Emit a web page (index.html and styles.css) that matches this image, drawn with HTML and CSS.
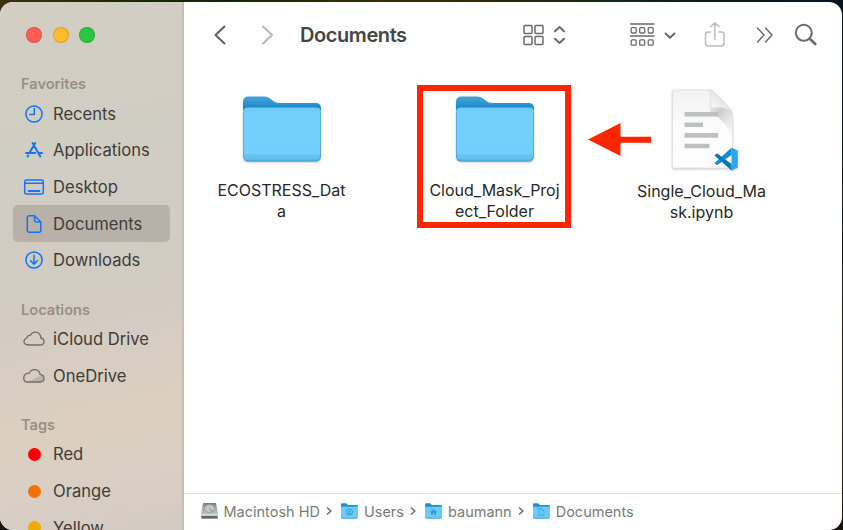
FILE: index.html
```
<!DOCTYPE html>
<html lang="en">
<head>
<meta charset="utf-8">
<title>Documents</title>
<link rel="stylesheet" href="styles.css">
</head>
<body>
<svg width="0" height="0" class="defs" aria-hidden="true">
  <defs>
    <linearGradient id="back" x1="0" y1="0" x2="0" y2="1"><stop offset="0" stop-color="#46a5da"/><stop offset=".22" stop-color="#1685c6"/><stop offset="1" stop-color="#2c92cd"/></linearGradient>
    <linearGradient id="front" x1="0" y1="0" x2="0" y2="1"><stop offset="0" stop-color="#6bcaf9"/><stop offset=".1" stop-color="#73cffb"/><stop offset=".86" stop-color="#72cffb"/><stop offset=".88" stop-color="#62c1ef"/><stop offset=".93" stop-color="#65c4f2"/><stop offset="1" stop-color="#50ade0"/></linearGradient>
    <linearGradient id="page" x1="0" y1="0" x2="0" y2="1"><stop offset="0" stop-color="#f2f2f2"/><stop offset=".5" stop-color="#fcfcfc"/><stop offset="1" stop-color="#fff"/></linearGradient>
    <linearGradient id="curl" x1="0" y1="1" x2="1" y2="0"><stop offset="0" stop-color="#fff"/><stop offset=".5" stop-color="#e9e9e9"/><stop offset="1" stop-color="#ccc"/></linearGradient>
    <linearGradient id="shade" x1="0" y1="0" x2="1" y2="1"><stop offset=".25" stop-color="#aaa" stop-opacity="0"/><stop offset=".55" stop-color="#999" stop-opacity=".45"/><stop offset="1" stop-color="#aaa" stop-opacity="0"/></linearGradient>
    <linearGradient id="disk" x1="0" y1="0" x2="0" y2="1"><stop offset="0" stop-color="#737779"/><stop offset=".3" stop-color="#a5abad"/><stop offset="1" stop-color="#c8ced1"/></linearGradient>
    <symbol id="folder" viewBox="0 0 80 68">
      <path d="M1 7Q1 1.500 6.500 1.500H22Q25.500 1.500 28 3.500L31.500 6.300Q33.500 8 37 8H73.500Q79 8 79 13.500V61H1Z" fill="url(#back)"/>
      <path d="M1 17Q1 12.500 6 12.500H74Q79 12.500 79 17V61Q79 66.500 73.500 66.500H6.500Q1 66.500 1 61Z" fill="url(#front)"/>
      <path d="M1.500 17V61Q1.500 66 6.500 66H73.500Q78.500 66 78.500 61V17" fill="none" stroke="#398bb5" stroke-opacity=".5"/>
    </symbol>
    <symbol id="minifolder" viewBox="0 0 17 16">
      <path d="M0 1.500Q0 .3 1.200.3H5L7 2H15.800Q17 2 17 3.200V14H0Z" fill="#2391cd"/>
      <path d="M0 3.700H17V14Q17 15.500 15.500 15.500H1.500Q0 15.500 0 14Z" fill="#6acbfa"/>
      <path d="M.5 14.500Q1 15.200 2 15.200H15Q16 15.200 16.500 14.500" fill="none" stroke="#4aa6d4"/>
    </symbol>
  </defs>
</svg>
<div class="window">
  <aside class="sidebar">
    <div class="lights"><i class="close"></i><i class="minimize"></i><i class="maximize"></i></div>
    <h2>Favorites</h2>
    <div class="row"><svg class="ico" viewBox="0 0 22 22"><circle cx="11" cy="11" r="8.100"/><path d="M11.300 5.500V11.500H6.800"/></svg><span>Recents</span></div>
    <div class="row"><svg class="ico apps" viewBox="0 0 22 22"><path d="M12.200 4L6.700 13.500M9.600 4L17.300 17.400M3 14.100H12.200M15.300 14.100H19M5.200 16.400L4.600 17.400"/></svg><span>Applications</span></div>
    <div class="row"><svg class="ico" viewBox="0 0 22 22"><rect x="1.700" y="4" width="18.600" height="14" rx="2"/><path d="M2 7.300H20"/><path d="M5.700 15H16.300" stroke-width="2.200"/></svg><span>Desktop</span></div>
    <div class="row selected"><svg class="ico" viewBox="0 0 22 22"><path d="M6.300 2.700H11.500L17.800 9V17.300Q17.800 19.300 15.800 19.300H6.300Q4.300 19.300 4.300 17.300V4.700Q4.300 2.700 6.300 2.700ZM11.500 3V7.300Q11.500 9 13.200 9H17.500"/></svg><span>Documents</span></div>
    <div class="row"><svg class="ico" viewBox="0 0 22 22"><circle cx="11" cy="11" r="8.100"/><path d="M11 6.300V15M7.600 11.800L11 15.200L14.400 11.800"/></svg><span>Downloads</span></div>
    <h2>Locations</h2>
    <div class="row"><svg class="ico gray" viewBox="0 0 22 22"><path d="M5.500 17H16.800C19.200 17 21 15.500 21 13.400C21 11.500 19.700 10.200 17.800 10C17.800 6.800 15.600 4.200 12.500 4.200C10.100 4.200 8.200 5.500 7.300 7.500C5.400 7.100 4 8.300 3.900 10C2.200 10.500 1 11.800 1 13.600C1 15.600 2.800 17 5.500 17Z"/></svg><span>iCloud Drive</span></div>
    <div class="row"><svg class="ico gray" viewBox="0 0 22 22"><path d="M5 16.800L19.500 9.800Q21 11 20.800 13.800Q20 16.800 16.800 16.800Z" fill="#bcb5ad" stroke="none"/><path d="M4.700 17H17C19.300 17 21 15.700 21 13.600C21 11.300 19.400 9.800 17.200 9.700C16.700 6.900 14.400 4.700 11.500 4.700C9.300 4.700 7.200 6 6.200 8.200C3 8.100.7 10.100.7 12.900C.7 15.400 2.400 17 4.700 17Z"/></svg><span>OneDrive</span></div>
    <h2>Tags</h2>
    <div class="row"><i class="tag red"></i><span>Red</span></div>
    <div class="row"><i class="tag orange"></i><span>Orange</span></div>
    <div class="row"><i class="tag yellow"></i><span>Yellow</span></div>
  </aside>
  <main class="main">
    <header class="toolbar">
      <svg class="nav" width="60" height="24" viewBox="0 0 60 24"><path d="M10.500 3.500L1.500 12L10.500 20.500" stroke="#5f5f5f"/><path d="M49 3.500L58 12L49 20.500" stroke="#b7b7b7"/></svg>
      <h1>Documents</h1>
      <svg class="view" width="44" height="24" viewBox="0 0 44 24"><g stroke-width="1.500"><rect x="1" y="2.500" width="8" height="8" rx="1"/><rect x="12" y="2.500" width="8" height="8" rx="1"/><rect x="1" y="13.500" width="8" height="8" rx="1"/><rect x="12" y="13.500" width="8" height="8" rx="1"/></g><path d="M32 8.200L36.500 4L41 8.200M32 15.800L36.500 20L41 15.800" stroke-width="2"/></svg>
      <svg class="group" width="48" height="26" viewBox="0 0 48 26"><path d="M.5 2H24M.5 14H24" stroke-width="1.500"/><g stroke-width="1.300"><rect x="1.200" y="5.600" width="5" height="5.400" rx="1"/><rect x="9.700" y="5.600" width="5" height="5.400" rx="1"/><rect x="18.200" y="5.600" width="5" height="5.400" rx="1"/><rect x="1.200" y="17.800" width="5" height="5.400" rx="1"/><rect x="9.700" y="17.800" width="5" height="5.400" rx="1"/><rect x="18.200" y="17.800" width="5" height="5.400" rx="1"/></g><path d="M35.500 11.500L40 15.700L44.500 11.500" stroke-width="2"/></svg>
      <svg class="share" width="22" height="26" viewBox="0 0 22 26"><path d="M6.500 10H4Q1.500 10 1.500 12.500V21.500Q1.500 24 4 24H17.500Q20 24 20 21.500V12.500Q20 10 17.500 10H15M10.800 17.500V1M6.500 4.800L10.800 .800L15 4.800"/></svg>
      <svg class="more" width="18" height="16" viewBox="0 0 18 16"><path d="M1.500 1L8 8L1.500 15M9.500 1L16 8L9.500 15" stroke-width="1.500"/></svg>
      <svg class="search" width="24" height="24" viewBox="0 0 24 24"><circle cx="9.800" cy="9.800" r="8" stroke-width="2"/><path d="M15.700 15.700L21.300 21" stroke-width="2.600"/></svg>
    </header>
    <section class="files">
      <div class="file"><svg class="folder" width="80" height="68"><use href="#folder"/></svg><p>ECOSTRESS_Dat<br>a</p></div>
      <div class="file"><svg class="folder" width="80" height="68"><use href="#folder"/></svg><p>Cloud_Mask_Proj<br>ect_Folder</p><i class="highlight"></i></div>
      <div class="file notebook"><svg class="doc" width="70" height="84" viewBox="0 0 70 84">
          <path d="M3.500 2H41Q43 3 45 5L58 18Q62.500 23 62.500 31V80H3.500Q2.500 80 2.500 79V3Q2.500 2 3.500 2Z" fill="url(#page)" stroke="#dedede" stroke-width=".8"/>
          <path d="M28 2H41L62 24V48Q53 29 40 25Q41 10 28 2Z" fill="url(#shade)"/>
          <path d="M38 2Q41.500 5 40.500 20Q54 18 60 23Q57 17 53 13L45 5Q41 1.500 38 2Z" fill="url(#curl)" stroke="#ddd" stroke-width=".6"/>
          <path d="M14.500 26.200H48M14.500 36.800H33M14.500 47.400H48M14.500 58H39.500" stroke="#bdc1c0" stroke-width="4.600"/>
          <path d="M61.500 59.800L67.800 62.500V79.500L61.500 82.500Z" fill="#2ca5ee"/>
          <path d="M61.500 59.800L44.500 75L47 77.200L61.500 67Z" fill="#168bd5"/>
          <path d="M44.500 67.400L47 65.200L61.500 76V82.500L44.500 67.400Z" fill="#0878bd"/>
        </svg><p>Single_Cloud_Ma<br>sk.ipynb</p></div>
      <svg class="arrow" width="64" height="34" viewBox="0 0 64 34"><path d="M0 16.500L32.500 0V13.700H63V19.700H32.500V33Z" fill="#fe2600"/></svg>
    </section>
    <footer class="path">
      <svg width="17" height="16" viewBox="0 0 17 16"><path d="M3 0H14Q15 0 15.200 1L17 11V14.500Q17 16 15.500 16H1.500Q0 16 0 14.500V11L1.800 1Q2 0 3 0Z" fill="url(#disk)"/><ellipse cx="8.500" cy="5.500" rx="5" ry="4" fill="#c3c8ca" stroke="#888e92" stroke-width=".6"/><path d="M8.500 5.500L12 9" stroke="#7c8285"/><path d="M.5 11.800H16.500" stroke="#e0e4e6"/><path d="M.5 13H16.500V15.500H.5Z" fill="#62696c"/></svg><span>Macintosh HD</span><svg class="sep" width="6" height="10" viewBox="0 0 6 10"><path d="M1 1.500L4.700 5L1 8.500"/></svg>
      <svg width="17" height="16" viewBox="0 0 17 16"><use href="#minifolder"/><circle cx="8.500" cy="9" r="3" fill="none" stroke="#3b9bd0"/><circle cx="8.500" cy="8.500" r="1" fill="#3b9bd0"/><path d="M6.500 11Q8.500 9 10.500 11" stroke="#3b9bd0" fill="none"/></svg><span>Users</span><svg class="sep" width="6" height="10" viewBox="0 0 6 10"><path d="M1 1.500L4.700 5L1 8.500"/></svg>
      <svg width="17" height="16" viewBox="0 0 17 16"><use href="#minifolder"/><path d="M5 9L8.500 6L12 9H11V12H9.300V10H7.700V12H6V9Z" fill="#3b9bd0"/></svg><span>baumann</span><svg class="sep" width="6" height="10" viewBox="0 0 6 10"><path d="M1 1.500L4.700 5L1 8.500"/></svg>
      <svg width="17" height="16" viewBox="0 0 17 16"><use href="#minifolder"/><path d="M6 5.700H9L11 7.700V12.300H6ZM9 5.700V7.700H11" fill="none" stroke="#48a9dc" stroke-width=".8"/></svg><span>Documents</span>
    </footer>
  </main>
</div>
</body>
</html>
```
FILE: styles.css
```
* { box-sizing: border-box; }
body {
  margin: 0;
  width: 843px;
  height: 530px;
  padding: 1.500px 1.500px 0 0;
  overflow: hidden;
  font-family: Inter, "Liberation Sans", sans-serif;
  background: linear-gradient(90deg, #3a3210 0, #1b2408 18%, #122408 27%, #302b0c 40%, #3a2a0c 52%, #172714 70%, #071720 92%, #07141d 100%) top / 100% 15px no-repeat,
    linear-gradient(#0a1820 0, #131514 50%, #31200d 80%, #17130a 100%);
}
.defs { position: absolute; }
h1, h2, p { margin: 0; }
.window {
  display: flex;
  width: 841.500px;
  height: 528.500px;
  border-radius: 13px;
  overflow: hidden;
  background: #fff;
}
.sidebar {
  flex: none;
  width: 184px;
  overflow: hidden;
  border-right: 2px solid #c6beb5;
  background: linear-gradient(168deg, #d2cec2 0%, #d0cdc4 30%, #d2cbc2 52%, #d5ccc3 63%, #dccfc0 78%, #d9cfc4 88%, #d3cac3 100%);
}
.lights { display: flex; gap: 10.400px; height: 71.800px; padding: 25.700px 0 0 26.200px; }
.lights i { width: 16px; height: 16px; border-radius: 50%; border: .5px solid #0002; }
.close { background: #ff5d55; }
.minimize { background: #ffbc2d; }
.maximize { background: #28c73f; }
.sidebar h2 {
  height: 22px;
  margin-top: 20px;
  padding-left: 21px;
  font-size: 14.600px;
  line-height: 22px;
  font-weight: 600;
  color: #989084;
}
.sidebar .lights + h2 { margin-top: 0; }
.row {
  display: flex;
  align-items: center;
  gap: 8px;
  height: 36.700px;
  margin: 0 12.500px 0 13px;
  padding-left: 10px;
  border-radius: 5px;
  font-size: 16.600px;
  color: #403d39;
  white-space: nowrap;
}
.selected { background: #b7b1a9; }
.ico { width: 22px; height: 22px; flex: none; fill: none; stroke: #1474f5; stroke-width: 1.500; stroke-linecap: round; stroke-linejoin: round; }
.apps { stroke-width: 2; }
.gray { stroke: #716c66; stroke-width: 1.300; }
.tag { width: 13px; height: 13px; margin: 0 4.500px; border-radius: 50%; }
.red { background: #fe0000; }
.orange { background: #f57100; }
.yellow { background: #ecac00; }
.main { flex: 1; display: flex; flex-direction: column; }
.toolbar { display: flex; align-items: center; height: 68px; padding: 0 0 2px 30px; }
.toolbar svg { flex: none; fill: none; stroke: #6a6a6a; stroke-linecap: round; stroke-linejoin: round; }
.toolbar .nav { stroke-width: 2; }
.toolbar h1 { width: 248.500px; padding-left: 26px; font-size: 20px; line-height: 24px; font-weight: 600; letter-spacing: -.42px; color: #454545; }
.group { margin-left: 63px; }
.toolbar .share { margin-left: 26px; stroke: #bcbcbc; stroke-width: 1.500; }
.more { margin-left: 30px; }
.search { margin-left: 20px; }
.files { flex: 1; position: relative; display: flex; padding: 17px 0 0 26px; }
.file { position: relative; width: 144px; margin-right: 69px; display: flex; flex-direction: column; align-items: center; }
.file svg { margin-top: 8.500px; filter: drop-shadow(0 1px 1px #0003); }
.file p { margin-top: 17px; margin-left: -1px; font-size: 16px; line-height: 21px; text-align: center; color: #282828; white-space: nowrap; }
.notebook { margin-right: 0; left: -6px; }
.file .doc { margin: 1px 0 0 6px; }
.notebook p { margin-top: 9.500px; }
.highlight { position: absolute; left: -6px; top: -2px; width: 154px; height: 143.500px; border: 6px solid #fe2600; }
.arrow { position: absolute; left: 404px; top: 53px; }
.path { display: flex; align-items: center; height: 37px; border-top: 1.500px solid #e4e4e4; padding: 0 0 2px 16.500px; font-size: 14.500px; color: #7a7a7a; }
.path svg { flex: none; }
.path span { margin-left: 6px; white-space: nowrap; }
.path .sep { margin: 0 8.500px 0 6.500px; fill: none; stroke: #777; stroke-width: 1.700; }
```
